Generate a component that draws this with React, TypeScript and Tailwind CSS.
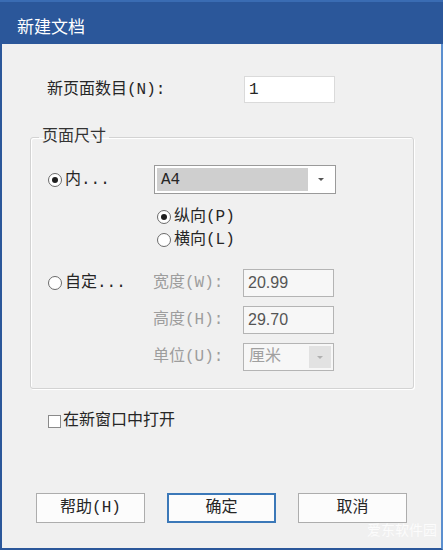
const font = { fontFamily: '"Liberation Mono", "Noto Sans CJK SC", monospace' };

const Radio = ({ checked }: { checked?: boolean }) => (
  <span className="w-[14px] h-[14px] rounded-full border border-[#6a6a6a] bg-white flex items-center justify-center shrink-0">
    {checked && <span className="w-[6px] h-[6px] rounded-full bg-[#1e1e1e]" />}
  </span>
);

const Arrow = ({ color = "#555" }: { color?: string }) => (
  <svg width="8" height="5" viewBox="0 0 8 5">
    <path d="M1 1h6L4 4z" fill={color} />
  </svg>
);

export default function App() {
  return (
    <div className="w-[443px] h-[550px] flex flex-col text-[16px] text-[#262626]" style={font}>
      <div className="h-[44px] bg-[#2b579a] border-t-2 border-[#3a6cb3] flex items-center pl-[17px] pt-[6px] text-white text-[17px]" style={{ fontFamily: '"Noto Sans CJK SC", sans-serif' }}>
        新建文档
      </div>
      <div className="flex-1 bg-[#f0f0f0] border-l-2 border-r-2 border-b-2 border-l-[#2b579a] border-r-[#5b8fcf] border-b-[#2b579a] flex flex-col relative">
        <div className="flex items-center mt-[32px]">
          <span className="ml-[45px] w-[197px]">新页面数目(N):</span>
          <div className="w-[91px] h-[27px] bg-white border border-[#dadada] flex items-center pl-[4px]">1</div>
        </div>

        <fieldset className="ml-[28px] w-[384px] mt-[22px] border border-[#d3d3d3] rounded-[3px] shadow-[inset_1px_1px_0_#fff,1px_1px_0_#fff] pb-[17px]">
          <legend className="ml-[8px] px-[3px] text-[#333]">页面尺寸</legend>

          <div className="flex items-center mt-[16px]">
            <div className="ml-[17px] w-[106px] flex items-center gap-[3px]">
              <Radio checked />
              <span>内...</span>
            </div>
            <div className="w-[182px] h-[29px] border-[1.5px] border-[#9a9a9a] bg-white flex items-center p-[2px]">
              <div className="w-[151px] h-full bg-[#cfcfcf] flex items-center pl-[4px]">A4</div>
              <div className="flex-1 flex items-center justify-center">
                <Arrow />
              </div>
            </div>
          </div>

          <div className="flex flex-col ml-[126px] mt-[11px]">
            <div className="h-[23px] flex items-center gap-[3px]">
              <Radio checked />
              <span>纵向(P)</span>
            </div>
            <div className="h-[23px] flex items-center gap-[3px]">
              <Radio />
              <span>横向(L)</span>
            </div>
          </div>

          <div className="flex mt-[18px]">
            <div className="ml-[17px] w-[105px] h-[28px] flex items-center gap-[3px]">
              <Radio />
              <span>自定...</span>
            </div>
            <div className="flex flex-col gap-[9px] text-[#9d9d9d]">
              <div className="flex items-center">
                <span className="w-[90px]">宽度(W):</span>
                <div className="w-[91px] h-[28px] border border-[#b4b4b4] bg-[#f7f7f7] flex items-center pl-[4px] text-[#555]" style={{ fontFamily: '"Liberation Sans", sans-serif' }}>20.99</div>
              </div>
              <div className="flex items-center">
                <span className="w-[90px]">高度(H):</span>
                <div className="w-[91px] h-[28px] border border-[#b4b4b4] bg-[#f7f7f7] flex items-center pl-[4px] text-[#555]" style={{ fontFamily: '"Liberation Sans", sans-serif' }}>29.70</div>
              </div>
              <div className="flex items-center">
                <span className="w-[90px]">单位(U):</span>
                <div className="w-[91px] h-[28px] border border-[#b4b4b4] bg-[#f7f7f7] flex items-center p-[2px]">
                  <span className="flex-1 pl-[3px] text-[#a0a0a0]">厘米</span>
                  <div className="w-[22px] h-full bg-[#e2e2e2] flex items-center justify-center">
                    <Arrow color="#b0b0b0" />
                  </div>
                </div>
              </div>
            </div>
          </div>
        </fieldset>

        <div className="flex items-center ml-[46px] mt-[20px] gap-[2px]">
          <span className="w-[13px] h-[13px] border border-[#8a8a8a] bg-white" />
          <span>在新窗口中打开</span>
        </div>

        <div className="flex gap-[22px] ml-[34px] mt-[60px]">
          <button className="w-[109px] h-[30px] border border-[#adadad] bg-[#fcfcfc]">帮助(H)</button>
          <button className="w-[109px] h-[30px] border-2 border-[#3b78b8] bg-[#fcfcfc]">确定</button>
          <button className="w-[109px] h-[30px] border border-[#adadad] bg-[#fcfcfc]">取消</button>
        </div>

        <div className="absolute right-[4px] bottom-[8px] text-[14px] text-white opacity-80" style={{ fontFamily: '"Noto Sans CJK SC", sans-serif' }}>
          爱东软件园
        </div>
      </div>
    </div>
  );
}
